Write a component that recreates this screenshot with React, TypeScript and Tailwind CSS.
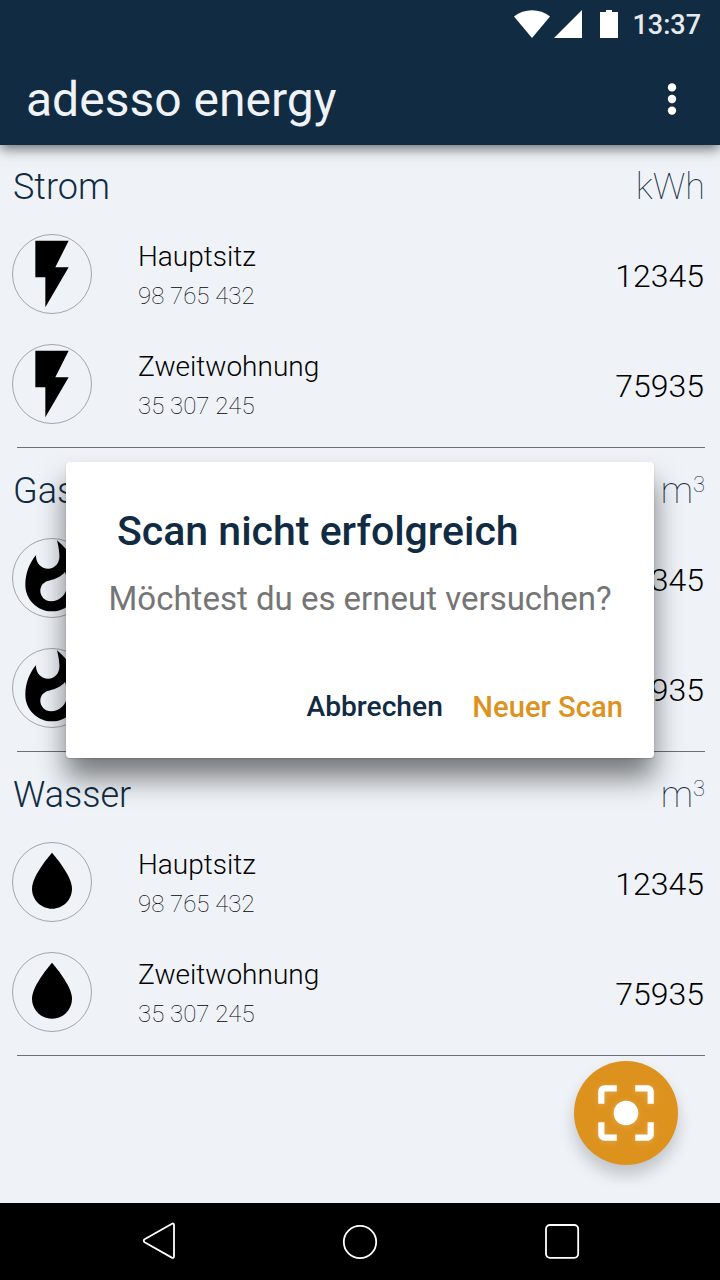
import type { ReactNode } from 'react';

const BOLT = 'M7 2v11h3v9l7-12h-4l4-8z';
const FLAME =
  'M13.5.67s.74 2.65.74 4.8c0 2.06-1.35 3.73-3.41 3.73-2.07 0-3.63-1.67-3.63-3.73l.03-.36C5.21 7.51 4 10.62 4 14c0 4.42 3.58 8 8 8s8-3.58 8-8C20 8.61 17.41 3.8 13.5.67zM11.71 19c-1.78 0-3.22-1.4-3.22-3.14 0-1.62 1.05-2.76 2.81-3.12 1.77-.36 3.6-1.21 4.62-2.58.39 1.29.59 2.65.59 4.04 0 2.65-2.15 4.8-4.8 4.8z';
const DROP = 'M12 20c-3.31 0-6-2.69-6-6 0-4 6-10.75 6-10.75S18 10 18 14c0 3.31-2.69 6-6 6z';
const SCAN =
  'M12 8c-2.21 0-4 1.79-4 4s1.79 4 4 4 4-1.79 4-4-1.79-4-4-4zm-7 7H3v4c0 1.1.9 2 2 2h4v-2H5v-4zM5 5h4V3H5c-1.1 0-2 .9-2 2v4h2V5zm14-2h-4v2h4v4h2V5c0-1.1-.9-2-2-2zm0 16h-4v2h4c1.1 0 2-.9 2-2v-4h-2v4z';

const meters = [
  { name: 'Hauptsitz', id: '98 765 432', value: '12345' },
  { name: 'Zweitwohnung', id: '35 307 245', value: '75935' },
];

function StatusBar() {
  return (
    <div className="flex h-[50px] items-center justify-end pr-[19px]">
      <svg className="h-[50px] w-[110px]" viewBox="510 0 110 50" fill="#fff">
        <path d="M514 16.5C524 8 540 8 550 16.5L532 38z" />
        <path d="M582 10v28h-28z" />
        <path d="M606 10h6v2h6v26h-18V12h6z" />
      </svg>
      <span className="ml-3 text-[27px] leading-[50px] font-medium text-[#e7eaec]">13:37</span>
    </div>
  );
}

function MeterRow({ icon, name, id, value }: { icon: string; name: string; id: string; value: string }) {
  return (
    <li className="flex h-[110px] items-center pr-4 pl-3">
      <div className="size-20 rounded-full border border-[#a3a6a9]">
        <svg className="-m-px size-20" viewBox="0 0 24 24">
          <path d={icon} />
        </svg>
      </div>
      <div className="ml-[46px] flex-1 pt-1">
        <p className="text-[28px] leading-[40px] font-light">{name}</p>
        <p className="text-[24px] leading-[38px] font-thin">{id}</p>
      </div>
      <span className="pt-1 text-[32px] font-light">{value}</span>
    </li>
  );
}

function Section({ title, unit, icon }: { title: string; unit: ReactNode; icon: string }) {
  return (
    <section className="h-[303px]">
      <div className="flex h-[74px] justify-between pt-2.5 pr-[15px] pl-[13px] text-[36px] leading-[64px] text-[#112b43]">
        <h2 className="font-light">{title}</h2>
        <span className="font-thin">{unit}</span>
      </div>
      <ul>
        {meters.map((m) => (
          <MeterRow key={m.name} icon={icon} {...m} />
        ))}
      </ul>
      <div className="mt-2 mr-[15px] ml-[17px] h-px bg-[#6c7072]" />
    </section>
  );
}

export default function App() {
  const cubic = (
    <>
      m<span className="relative -top-[11px] text-[22px]">3</span>
    </>
  );
  return (
    <div className="relative flex h-[1280px] w-[720px] flex-col overflow-hidden bg-[#eff3f8] font-['Roboto',sans-serif] text-black">
      <header className="h-[145px] bg-[#112b43] shadow-[0_4px_12px_rgba(0,0,0,0.55)]">
        <StatusBar />
        <div className="flex h-[95px] items-center justify-between pr-[43.5px] pl-[26px] text-[#eff3f8]">
          <h1 className="pt-1 text-[48px] leading-[95px]">adesso energy</h1>
          <svg className="mt-0.5 h-8 w-[10px]" viewBox="0 0 10 32" fill="#fff">
            <circle cx="5" cy="4.4" r="4.2" />
            <circle cx="5" cy="16" r="4.2" />
            <circle cx="5" cy="27.6" r="4.2" />
          </svg>
        </div>
      </header>

      <main className="flex flex-1 flex-col gap-px">
        <Section title="Strom" unit="kWh" icon={BOLT} />
        <Section title="Gas" unit={cubic} icon={FLAME} />
        <Section title="Wasser" unit={cubic} icon={DROP} />
      </main>

      <nav className="flex h-[77px] bg-black">
        <svg className="h-[77px] w-[720px]" viewBox="0 1203 720 77" fill="none" stroke="#fff" strokeWidth="1.8" strokeLinejoin="round">
          <path d="M144.6 1239.3L172 1223.7Q174 1223 174 1225V1256Q174 1258.500 171.800 1257.600L144.600 1242.200Q142.800 1240.700 144.600 1239.300z" />
          <circle cx="360" cy="1242" r="16.200" />
          <rect x="546" y="1225" width="32.200" height="32.800" rx="4" />
        </svg>
      </nav>

      <button className="absolute top-[1061px] left-[574px] flex size-[104px] items-center justify-center rounded-full bg-[#dd921e] shadow-[0_10px_16px_rgba(0,0,0,0.2)]">
        <svg className="size-[74px] shrink-0 drop-shadow-[0_1px_3px_rgba(255,255,255,0.2)]" viewBox="0 0 24 24" fill="#fff">
          <path d={SCAN} />
        </svg>
      </button>

      <div
        role="dialog"
        className="absolute top-[462px] left-[66px] flex h-[296px] w-[588px] flex-col rounded-[4px] bg-white shadow-[0_20px_28px_rgba(0,0,0,0.5),0_1px_2px_rgba(0,0,0,0.15)]"
      >
        <h2 className="mt-[42px] ml-[51px] text-[41px] leading-[54px] font-medium whitespace-nowrap text-[#112b43]">
          Scan nicht erfolgreich
        </h2>
        <p className="mt-[19px] ml-[42.5px] text-[33px] leading-[44px] whitespace-nowrap text-[#757575]">
          Möchtest du es erneut versuchen?
        </p>
        <div className="mt-[66px] flex items-baseline justify-end gap-[29.5px] pr-[31px] leading-[40px] font-medium">
          <button className="pb-px text-[28.2px] text-[#112b43] relative -top-px">Abbrechen</button>
          <button className="text-[29.2px] text-[#dd921e]">Neuer Scan</button>
        </div>
      </div>
    </div>
  );
}
